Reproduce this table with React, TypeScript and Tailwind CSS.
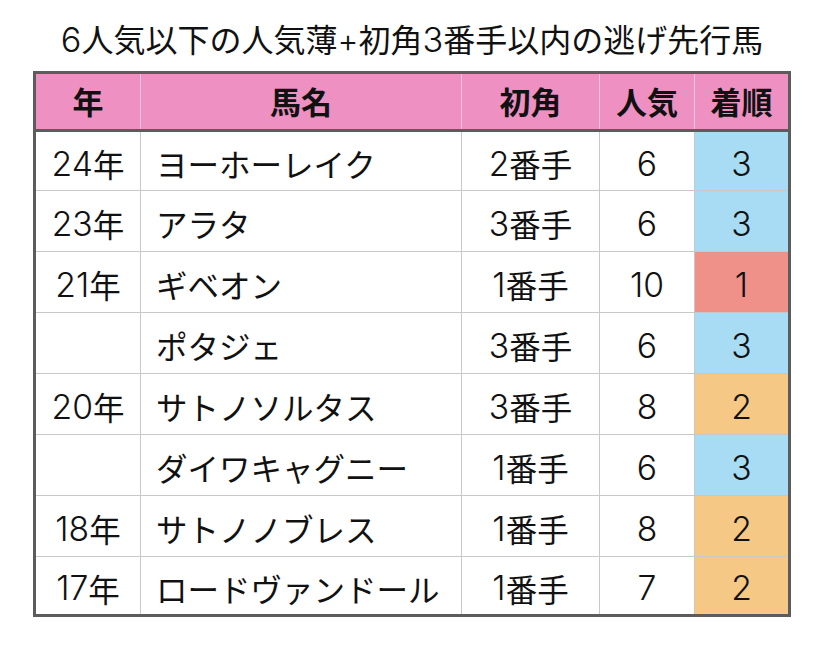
import React from 'react';

type Row = { year: string; name: string; corner: string; pop: string; place: string };

const rows: Row[] = [
  { year: '24年', name: 'ヨーホーレイク', corner: '2番手', pop: '6', place: '3' },
  { year: '23年', name: 'アラタ', corner: '3番手', pop: '6', place: '3' },
  { year: '21年', name: 'ギベオン', corner: '1番手', pop: '10', place: '1' },
  { year: '', name: 'ポタジェ', corner: '3番手', pop: '6', place: '3' },
  { year: '20年', name: 'サトノソルタス', corner: '3番手', pop: '8', place: '2' },
  { year: '', name: 'ダイワキャグニー', corner: '1番手', pop: '6', place: '3' },
  { year: '18年', name: 'サトノノブレス', corner: '1番手', pop: '8', place: '2' },
  { year: '17年', name: 'ロードヴァンドール', corner: '1番手', pop: '7', place: '2' },
];

// first and last rows are a touch shorter so the grid lands on the picture's lines
const heights = ['h-[58px]', 'h-[61px]', 'h-[61px]', 'h-[61px]', 'h-[61px]', 'h-[61px]', 'h-[61px]', 'h-[58px]'];

const placeBg: Record<string, string> = {
  '1': 'bg-[#ef9189]',
  '2': 'bg-[#f5c885]',
  '3': 'bg-[#a7dcf4]',
};

// digits in the picture are wide and tall, so set them in Inter a bit larger
function T({ s }: { s: string }) {
  const parts = s.split(/(\d+)/).filter(Boolean);
  return (
    <>
      {parts.map((p, i) =>
        /^\d+$/.test(p) ? (
          <span key={i} className="font-['Inter',sans-serif] font-light text-[1.07em]">
            {p}
          </span>
        ) : (
          <span key={i}>{p}</span>
        )
      )}
    </>
  );
}

export default function App() {
  return (
    <div className="w-[824px] h-[652px] bg-white flex flex-col items-center font-['Noto_Sans_CJK_JP','Noto_Sans',sans-serif] text-[#111]">
      <h1 className="mt-[19px] h-[39px] leading-[39px] text-[32px] font-normal whitespace-nowrap">
        <T s="6人気以下の人気薄" />
        <span className="font-['Inter',sans-serif] font-light">+</span>
        <T s="初角3番手以内の逃げ先行馬" />
      </h1>

      <div className="mt-[13px] w-[758px] border-[3px] border-[#5c5c5c]">
        {/* header */}
        <div className="flex h-[58px] bg-[#ee90c2] border-b-[3px] border-[#5c5c5c] text-[31px] font-bold">
          <div className="w-[104px] flex items-center justify-center">年</div>
          <div className="w-[321px] flex items-center justify-center border-l border-[#f3c6dd]">馬名</div>
          <div className="w-[138px] flex items-center justify-center border-l border-[#f3c6dd]">初角</div>
          <div className="w-[95px] flex items-center justify-center border-l border-[#f3c6dd]">人気</div>
          <div className="w-[94px] flex items-center justify-center border-l border-[#f3c6dd]">着順</div>
        </div>

        {/* body */}
        {rows.map((r, i) => (
          <div
            key={i}
            className={`flex text-[31.5px] ${heights[i]} ${i > 0 ? 'border-t border-[#c8c8c8]' : ''}`}
          >
            <div className="w-[104px] pt-[6px] flex items-center justify-center whitespace-nowrap">
              <T s={r.year} />
            </div>
            <div className="w-[321px] pt-[6px] flex items-center pl-[15px] border-l border-[#c8c8c8] whitespace-nowrap">
              {r.name}
            </div>
            <div className="w-[138px] pt-[6px] flex items-center justify-center border-l border-[#c8c8c8] whitespace-nowrap">
              <T s={r.corner} />
            </div>
            <div className="w-[95px] pt-[6px] flex items-center justify-center border-l border-[#c8c8c8]">
              <T s={r.pop} />
            </div>
            <div className={`w-[94px] pt-[6px] flex items-center justify-center border-l border-[#c8c8c8] ${placeBg[r.place]}`}>
              <T s={r.place} />
            </div>
          </div>
        ))}
      </div>
    </div>
  );
}
